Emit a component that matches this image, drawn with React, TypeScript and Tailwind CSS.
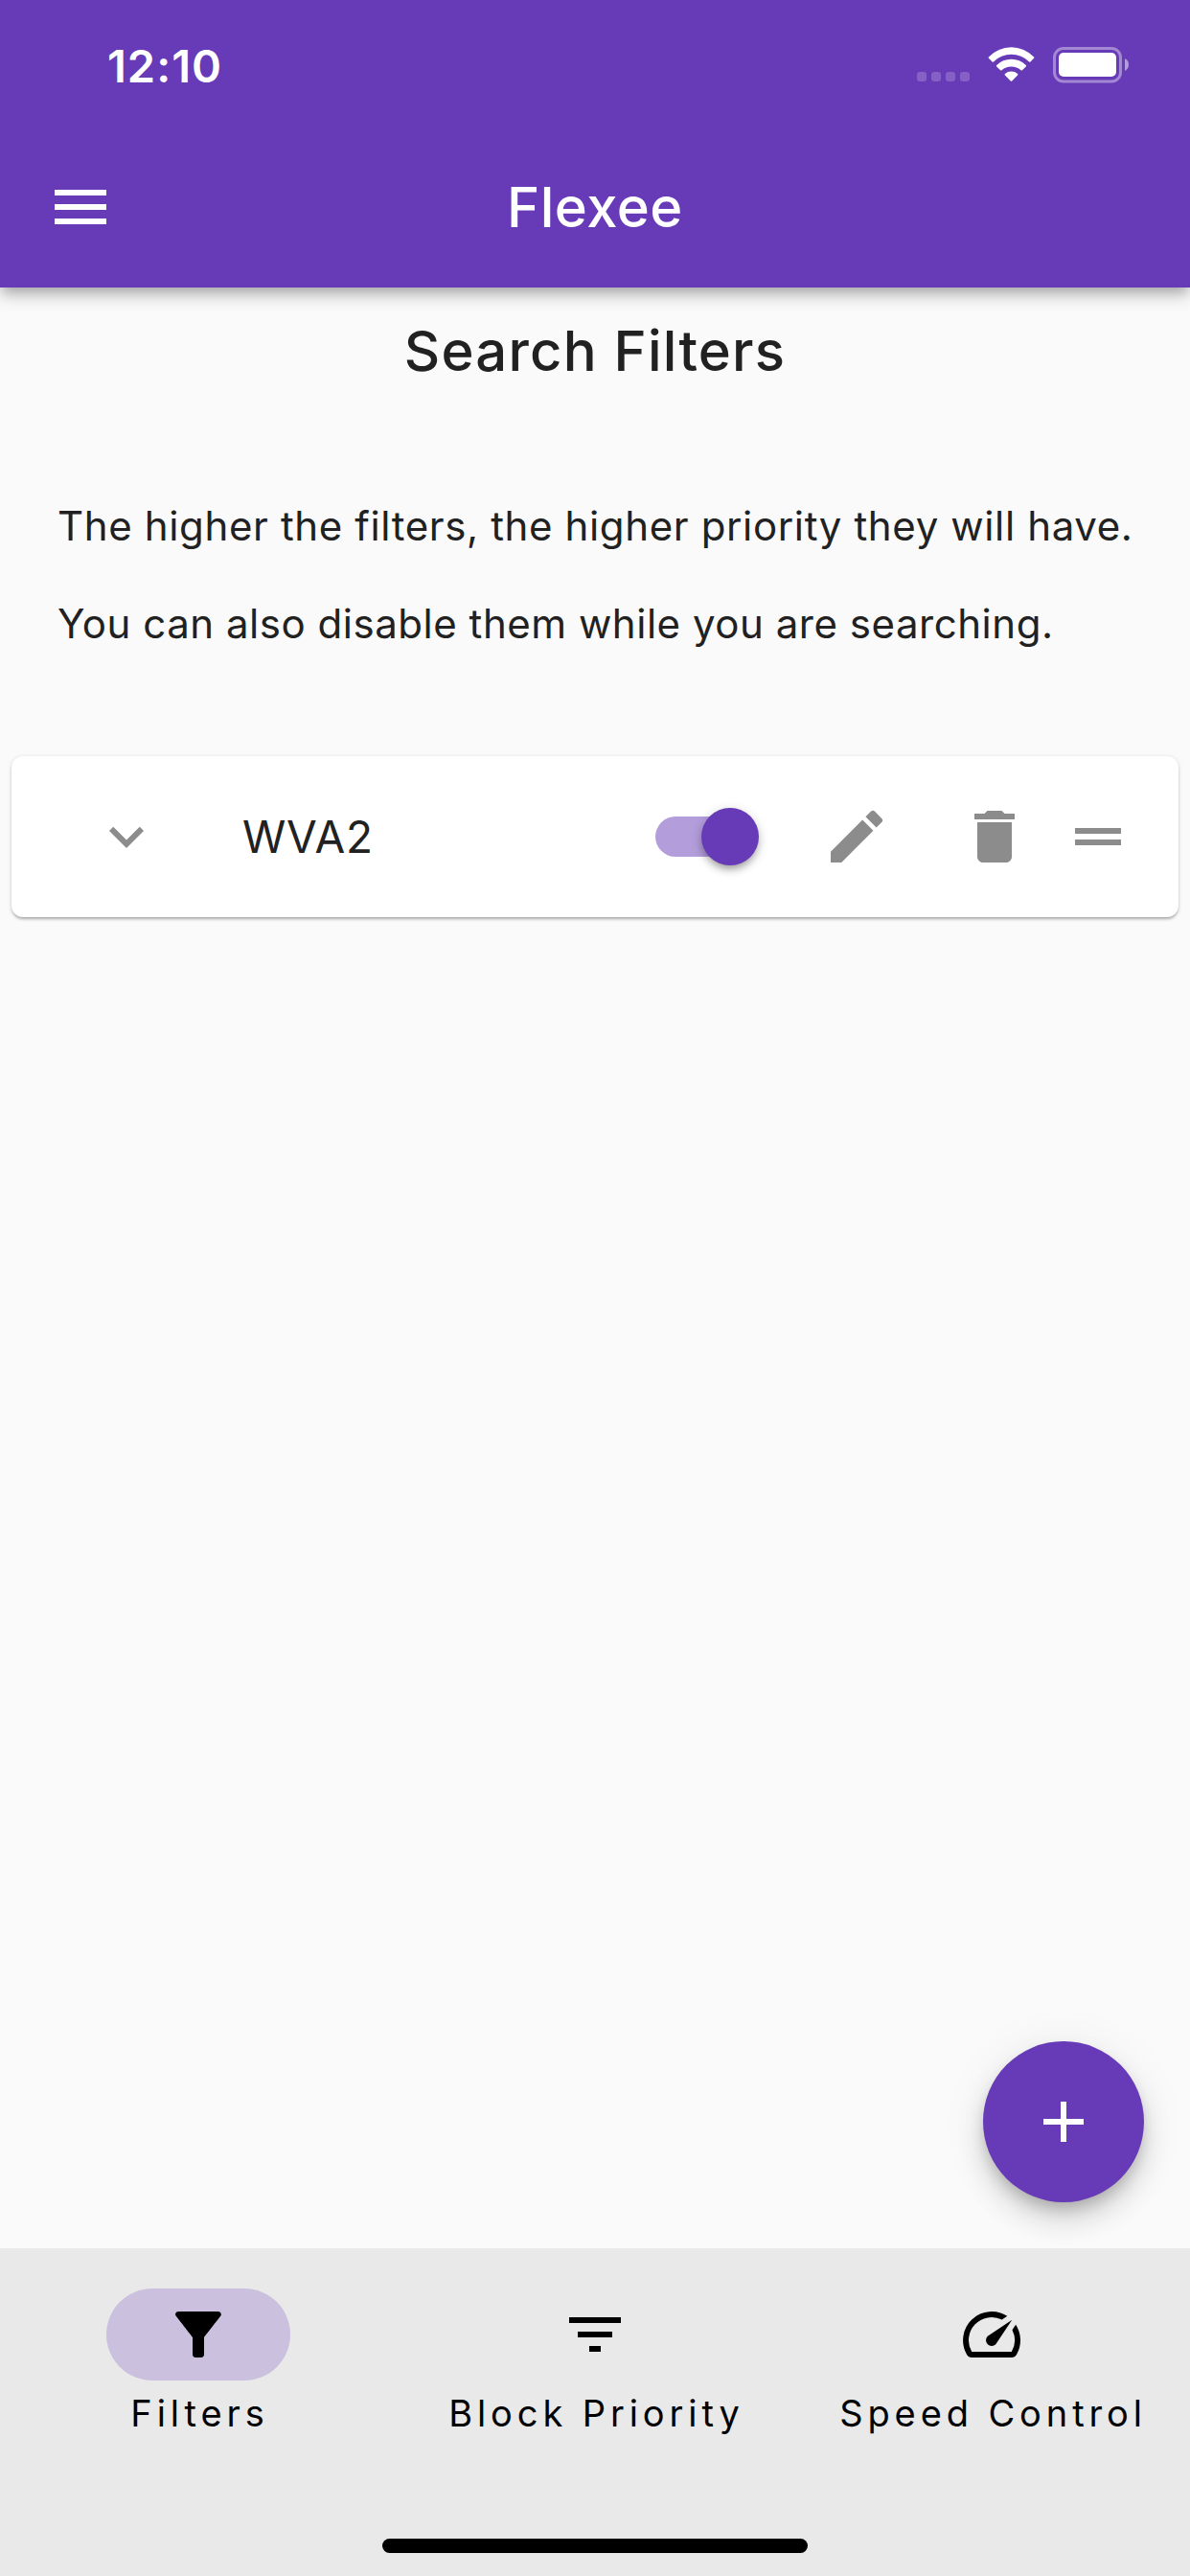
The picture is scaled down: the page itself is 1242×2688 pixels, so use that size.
import { FunctionComponent } from "react";
import { IconType } from "react-icons";
import {
  MdAdd,
  MdDelete,
  MdDragHandle,
  MdEdit,
  MdExpandMore,
  MdFilterAlt,
  MdFilterList,
  MdMenu,
  MdSpeed,
} from "react-icons/md";

interface NavItem {
  label: string;
  icon: IconType;
  active?: boolean;
}

interface SearchFilter {
  id: number;
  name: string;
}

const navItems: NavItem[] = [
  { label: "Filters", icon: MdFilterAlt, active: true },
  { label: "Block Priority", icon: MdFilterList },
  { label: "Speed Control", icon: MdSpeed },
];

const filters: SearchFilter[] = [{ id: 1, name: "WVA2" }];

const StatusIcons: FunctionComponent = () => (
  <svg width={230} height={40} viewBox="950 48 230 40" fill="#fff">
    {[957, 972, 987, 1002].map((x) => (
      <rect key={x} x={x} y={75} width={10} height={10} rx={3} opacity={0.2} />
    ))}
    <path d="M1031.9 59.4A32.6 32.6 0 0 1 1079.1 59.4Q1079.8 60.1 1079.1 60.8L1075.4 64.4Q1074.8 65 1074.1 64.4A26.6 26.6 0 0 0 1036.9 64.4Q1036.2 65 1035.6 64.4L1031.9 60.8Q1031.2 60.1 1031.9 59.4Z" />
    <path d="M1040.2 68A21.6 21.6 0 0 1 1070.8 68Q1071.5 68.7 1070.8 69.4L1066.9 73.2Q1066.3 73.8 1065.5 73.2A15.4 15.4 0 0 0 1045.5 73.2Q1044.7 73.8 1044.1 73.2L1040.2 69.4Q1039.5 68.7 1040.2 68Z" />
    <path d="M1048.9 77A10 10 0 0 1 1062.1 77Q1062.8 77.7 1062.1 78.4L1056.2 84.5Q1055.5 85.2 1054.8 84.5L1048.9 78.4Q1048.2 77.7 1048.9 77Z" />
    <rect
      x={1100.5}
      y={50.5}
      width={69}
      height={34.5}
      rx={9.5}
      fill="none"
      stroke="#fff"
      strokeWidth={3}
      opacity={0.4}
    />
    <rect x={1105} y={55} width={60} height={25} rx={5} />
    <path d="M1174 61Q1178 63.4 1178 67.5T1174 74Z" opacity={0.5} />
  </svg>
);

const Header: FunctionComponent = () => (
  <header className="relative z-10 h-[300px] shrink-0 bg-[#673ab7] text-white shadow-[0_6px_12px_-3px_rgba(0,0,0,0.24),0_10px_16px_0_rgba(0,0,0,0.16)]">
    <div className="flex h-[132px] items-center justify-between pt-1 pr-[62px] pl-28">
      <span className="text-[47px] leading-none font-semibold tracking-[1px]">
        12:10
      </span>
      <StatusIcons />
    </div>
    <div className="grid h-[168px] grid-cols-[1fr_auto_1fr] items-center px-12">
      <button aria-label="Menu">
        <MdMenu size={72} />
      </button>
      <h1 className="text-[58px] leading-none font-[550] tracking-[0.5px]">
        Flexee
      </h1>
    </div>
  </header>
);

const Switch: FunctionComponent = () => (
  <span className="relative h-[60px] w-[108px]">
    <span className="absolute top-[9px] left-0 h-[42px] w-[99px] rounded-full bg-[#b39ddb]" />
    <span className="absolute top-0 right-0 size-[60px] rounded-full bg-[#673ab7] shadow-[0_6px_9px_-3px_rgba(0,0,0,0.3),0_3px_12px_0_rgba(0,0,0,0.2)]" />
  </span>
);

const FilterCard: FunctionComponent<{ filter: SearchFilter }> = ({
  filter,
}) => (
  <div className="mx-3 flex h-[168px] items-center rounded-xl bg-white pr-12 pl-[84px] text-[#8c8c8c] shadow-[0_3px_3px_-1px_rgba(0,0,0,0.24),0_1px_4px_0_rgba(0,0,0,0.16)]">
    <MdExpandMore size={72} />
    <span className="ml-[85px] text-[46px] leading-none tracking-[0.78px] text-[#212121]">
      {filter.name}
    </span>
    <div className="ml-auto flex items-center">
      <Switch />
      <MdEdit size={72} className="ml-[66px]" />
      <MdDelete size={72} className="ml-[72px]" />
      <MdDragHandle size={72} className="ml-9" />
    </div>
  </div>
);

const BottomNav: FunctionComponent = () => (
  <nav className="flex h-[342px] shrink-0 flex-col items-center justify-between bg-[#e9e9e9] pt-[42px] pb-6 text-black">
    <div className="grid w-full grid-cols-3">
      {navItems.map(({ label, icon: Icon, active }) => (
        <div key={label} className="flex flex-col items-center">
          <span
            className={`flex h-24 w-48 items-center justify-center rounded-full ${
              active ? "bg-[#cbc0de]" : ""
            }`}
          >
            <Icon size={72} />
          </span>
          <span className="mt-3.5 pl-[3px] text-[38px] leading-10 tracking-[4.9px] whitespace-nowrap">
            {label}
          </span>
        </div>
      ))}
    </div>
    <div className="h-[15px] w-[444px] rounded-full bg-black" />
  </nav>
);

export default function App() {
  return (
    <div className="flex h-[2688px] w-[1242px] flex-col overflow-hidden bg-[#fafafa] font-['Inter',sans-serif] text-[#212121]">
      <Header />
      <main className="relative flex-1 pt-[30px]">
        <h2 className="text-center text-[58px] leading-[72px] font-medium tracking-[1.22px]">
          Search Filters
        </h2>
        <div className="mt-24 mb-[87px] pl-[60px] text-[42px] leading-[102px] whitespace-nowrap">
          <p className="tracking-[0.63px]">
            The higher the filters, the higher priority they will have.
          </p>
          <p className="tracking-[0.53px]">
            You can also disable them while you are searching.
          </p>
        </div>
        {filters.map((filter) => (
          <FilterCard key={filter.id} filter={filter} />
        ))}
        <button
          aria-label="Add filter"
          className="absolute right-12 bottom-12 flex size-[168px] items-center justify-center rounded-full bg-[#673ab7] text-white shadow-[0_9px_15px_-3px_rgba(0,0,0,0.2),0_18px_30px_0_rgba(0,0,0,0.14),0_3px_54px_0_rgba(0,0,0,0.06)]"
        >
          <MdAdd size={72} />
        </button>
      </main>
      <BottomNav />
    </div>
  );
}
